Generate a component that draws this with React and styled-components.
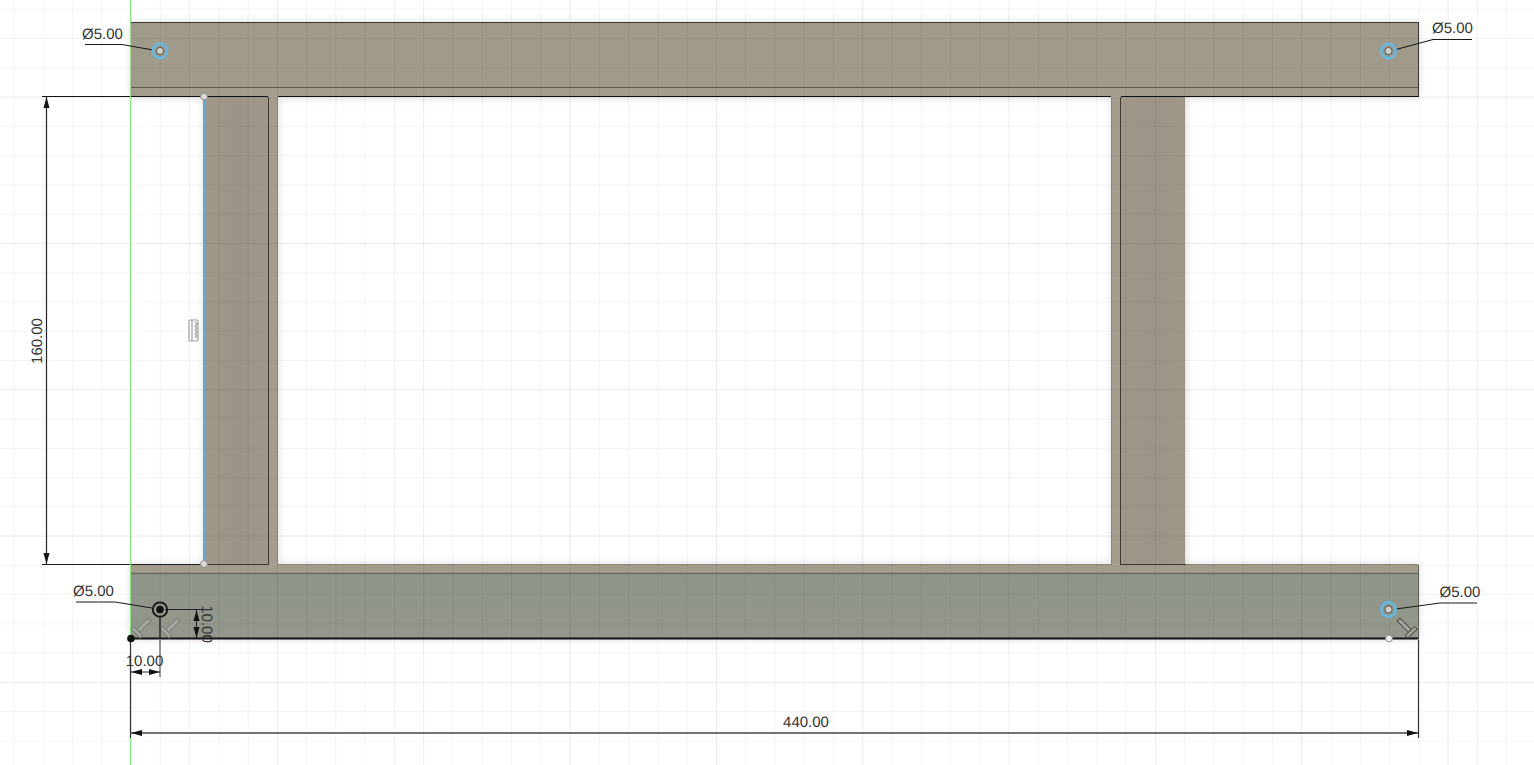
import React from 'react';
import styled, { createGlobalStyle } from 'styled-components';

const GlobalStyle = createGlobalStyle`
  html, body {
    margin: 0;
    padding: 0;
    background: #fff;
    overflow: hidden;
  }
`;

const Canvas = styled.main`
  width: 1534px;
  height: 765px;
  background: #fff;
  overflow: hidden;
`;

const Sketch = styled.svg`
  display: block;
`;

const DimText = styled.text`
  font-family: "Liberation Sans", Arial, sans-serif;
  font-size: 15px;
  fill: #333;
  text-rendering: geometricPrecision;
`;

const WIDTH = 1534;
const HEIGHT = 765;
const STEP = 29.27;
const ORIGIN_X = 131;
const MAJOR_Y = 682.4;

function gridLines() {
  const lines = [];
  for (let i = -5; i < 50; i++) {
    const x = ORIGIN_X + i * STEP;
    lines.push({ key: 'v' + i, x1: x, y1: 0, x2: x, y2: HEIGHT, major: ((i % 5) + 5) % 5 === 0 });
  }
  for (let i = -3; i < 25; i++) {
    const y = MAJOR_Y - i * STEP;
    lines.push({ key: 'h' + i, x1: 0, y1: y, x2: WIDTH, y2: y, major: ((i % 5) + 5) % 5 === 0 });
  }
  return lines;
}

function Grid() {
  return (
    <g>
      {gridLines().map((l) => (
        <line
          key={l.key}
          x1={l.x1}
          y1={l.y1}
          x2={l.x2}
          y2={l.y2}
          stroke={l.major ? 'rgba(0,0,0,0.08)' : 'rgba(0,0,0,0.045)'}
          strokeWidth="1"
        />
      ))}
    </g>
  );
}

function Arrow({ x, y, dir }) {
  const pts = {
    left: `${x},${y} ${x + 11},${y - 3} ${x + 11},${y + 3}`,
    right: `${x},${y} ${x - 11},${y - 3} ${x - 11},${y + 3}`,
    up: `${x},${y} ${x - 3},${y + 11} ${x + 3},${y + 11}`,
    down: `${x},${y} ${x - 3},${y - 11} ${x + 3},${y - 11}`,
  };
  return <polygon points={pts[dir]} fill="#111" />;
}

// perpendicular constraint glyph, drawn upright then rotated
function PerpGlyph({ x, y, rotate, stroke = '#7c7c78' }) {
  return (
    <g transform={`translate(${x} ${y}) rotate(${rotate})`} fill="#a6a8a1" stroke={stroke} strokeWidth="1">
      <rect x="-2" y="-11" width="4" height="16" />
      <rect x="-6.5" y="5" width="13" height="3.6" />
    </g>
  );
}

function Hole({ x, y }) {
  return (
    <g>
      <circle cx={x} cy={y} r="7.2" fill="none" stroke="#62bbe6" strokeWidth="2.4" />
      <circle cx={x} cy={y} r="3.6" fill="#cfcfcc" stroke="#55554f" strokeWidth="1" />
    </g>
  );
}

const HOLES = [
  { x: 160, y: 51 },
  { x: 1388.5, y: 51 },
  { x: 1388.5, y: 609.5 },
];

const LEADERS = [
  { points: '85,44.5 122,44.5 153,50', label: 'Ø5.00', tx: 82, ty: 39 },
  { points: '1472,39.5 1433,39.5 1396,49.5', label: 'Ø5.00', tx: 1432, ty: 33 },
  { points: '76,602 115,602 152,608', label: 'Ø5.00', tx: 73, ty: 596 },
  { points: '1477,603 1440,603 1396,609', label: 'Ø5.00', tx: 1439.5, ty: 597 },
];

export default function App() {
  return (
    <Canvas>
      <GlobalStyle />
      <Sketch width={WIDTH} height={HEIGHT} viewBox={`0 0 ${WIDTH} ${HEIGHT}`}>
        <defs>
          <filter id="soft" x="-10%" y="-10%" width="120%" height="120%">
            <feGaussianBlur stdDeviation="4" />
          </filter>
          <linearGradient id="colShade" x1="0" y1="0" x2="1" y2="0">
            <stop offset="0" stopColor="#9f9889" />
            <stop offset="0.55" stopColor="#9c9587" />
            <stop offset="1" stopColor="#9f9889" />
          </linearGradient>
          <linearGradient id="bottomShade" x1="0" y1="0" x2="0" y2="1">
            <stop offset="0" stopColor="#90958a" />
            <stop offset="1" stopColor="#93978c" />
          </linearGradient>
        </defs>

        {/* soft shadow round the body */}
        <g fill="#000" opacity="0.14" filter="url(#soft)">
          <rect x="131" y="22" width="1288" height="76" />
          <rect x="204" y="96" width="74" height="470" />
          <rect x="1112" y="96" width="74" height="470" />
          <rect x="131" y="564" width="1288" height="75" />
        </g>

        {/* body */}
        <rect x="131" y="22.5" width="1287.5" height="65" fill="#a09a8b" />
        <rect x="131" y="87" width="1287.5" height="9.5" fill="#a49d8e" />
        <rect x="204" y="96.5" width="64.5" height="468" fill="url(#colShade)" />
        <rect x="268.5" y="96.5" width="9" height="468" fill="#a49d8e" />
        <rect x="1111.5" y="96.5" width="9" height="468" fill="#a49d8e" />
        <rect x="1120.5" y="96.5" width="64.5" height="468" fill="url(#colShade)" />
        <rect x="131" y="564.5" width="1287.5" height="9" fill="#a49d8e" />
        <rect x="131" y="573" width="1287.5" height="65.5" fill="url(#bottomShade)" />

        <Grid />

        {/* edges */}
        <g stroke="#3a382f" strokeWidth="1" fill="none">
          <line x1="131" y1="22.5" x2="1418.5" y2="22.5" />
          <line x1="131" y1="87.5" x2="1418.5" y2="87.5" stroke="#5d594c" />
          <line x1="1418.5" y1="22" x2="1418.5" y2="97" />
          <line x1="1418.5" y1="565" x2="1418.5" y2="639" stroke="#5f5f56" />
          <line x1="268.5" y1="97" x2="268.5" y2="565" />
          <line x1="1120.5" y1="97" x2="1120.5" y2="565" />
          <line x1="277.5" y1="97" x2="277.5" y2="565" stroke="#8a8574" />
          <line x1="1111.5" y1="97" x2="1111.5" y2="565" stroke="#8a8574" />
          <line x1="204" y1="564.5" x2="268" y2="564.5" />
          <line x1="1120" y1="564.5" x2="1186" y2="564.5" />
          <line x1="278" y1="564.5" x2="1111" y2="564.5" stroke="#8f8a79" />
          <line x1="1186" y1="564.5" x2="1418" y2="564.5" stroke="#8f8a79" />
          <line x1="131" y1="573.5" x2="1418.5" y2="573.5" stroke="#666a61" strokeWidth="1.4" />
        </g>

        {/* top edge of the opening, broken where the strips cross it */}
        <g stroke="#111" strokeWidth="1">
          <line x1="42" y1="96.5" x2="268" y2="96.5" />
          <line x1="278" y1="96.5" x2="1111" y2="96.5" />
          <line x1="1121" y1="96.5" x2="1418.5" y2="96.5" />
        </g>
        <line x1="42" y1="564.5" x2="204" y2="564.5" stroke="#222" strokeWidth="1" />

        {/* sketch axes and selected lines */}
        <line x1="130.5" y1="0" x2="130.5" y2="765" stroke="#8fe48f" strokeWidth="1.2" />
        <line x1="130.5" y1="22" x2="130.5" y2="97" stroke="#a8dd9c" strokeWidth="1" />
        <line x1="204" y1="97" x2="204" y2="564" stroke="#5aa9d6" strokeWidth="2" />
        <line x1="130.5" y1="640" x2="130.5" y2="738" stroke="#333" strokeWidth="1.2" />
        <line x1="160" y1="640" x2="160" y2="677" stroke="#555" strokeWidth="1.2" />
        <line x1="1418.5" y1="640" x2="1418.5" y2="738" stroke="#333" strokeWidth="1.2" />
        <line x1="131" y1="638.5" x2="1418.5" y2="638.5" stroke="#111" strokeWidth="2" />

        {/* 160 dimension */}
        <line x1="46.5" y1="97" x2="46.5" y2="564" stroke="#222" strokeWidth="1.2" />
        <Arrow x={46.5} y={97} dir="up" />
        <Arrow x={46.5} y={564} dir="down" />

        {/* 440 dimension */}
        <line x1="131" y1="733" x2="1418" y2="733" stroke="#444" strokeWidth="1.4" />
        <Arrow x={131} y={733} dir="left" />
        <Arrow x={1418} y={733} dir="right" />

        {/* 10 horizontal dimension */}
        <line x1="131" y1="672" x2="160" y2="672" stroke="#222" strokeWidth="1" />
        <Arrow x={131} y={672} dir="left" />
        <Arrow x={160} y={672} dir="right" />

        {/* 10 vertical dimension */}
        <line x1="165" y1="609.5" x2="212" y2="609.5" stroke="#222" strokeWidth="1" />
        <line x1="196.5" y1="610" x2="196.5" y2="638" stroke="#222" strokeWidth="1" />
        <Arrow x={196.5} y={610} dir="up" />
        <Arrow x={196.5} y={638} dir="down" />

        {/* constraint glyphs */}
        <PerpGlyph x={141.6} y={627.4} rotate={45} />
        <PerpGlyph x={170.6} y={627.4} rotate={45} />
        <PerpGlyph x={1406.4} y={627.4} rotate={-45} stroke="#4d4d48" />
        <g fill="none" stroke="#a0a0a0" strokeWidth="1.2">
          <rect x="189" y="320" width="9" height="21" rx="1" />
          <line x1="192" y1="320" x2="192" y2="341" />
          <path d="M195 322 l2 2 l-2 2 l2 2 l-2 2 l2 2 l-2 2 l2 2 l-2 2" />
        </g>

        {/* leaders */}
        {LEADERS.map((l) => (
          <polyline key={l.points} points={l.points} fill="none" stroke="#1a1a1a" strokeWidth="1.1" />
        ))}

        {/* holes and points */}
        {HOLES.map((h) => (
          <Hole key={h.x + '-' + h.y} x={h.x} y={h.y} />
        ))}
        <circle cx="160" cy="609.5" r="7.2" fill="none" stroke="#111" strokeWidth="1.8" />
        <circle cx="160" cy="609.5" r="3.8" fill="#111" />
        <line x1="160" y1="616" x2="160" y2="639" stroke="#222" strokeWidth="1.4" />
        <circle cx="131" cy="638.5" r="3.8" fill="#111" />
        <circle cx="204" cy="96.5" r="3.4" fill="#dcdcd8" stroke="#8d8d88" strokeWidth="1" />
        <circle cx="204" cy="564" r="3.4" fill="#dcdcd8" stroke="#8d8d88" strokeWidth="1" />
        <circle cx="1389" cy="638.5" r="3.4" fill="#f2f2f0" stroke="#8d8d88" strokeWidth="1" />

        {/* labels */}
        {LEADERS.map((l) => (
          <DimText key={l.tx} x={l.tx} y={l.ty}>{l.label}</DimText>
        ))}
        <DimText x={806} y={727} textAnchor="middle">440.00</DimText>
        <DimText x={144.5} y={666} textAnchor="middle">10.00</DimText>
        <DimText transform="translate(42 341) rotate(-90)" textAnchor="middle">160.00</DimText>
        <DimText transform="translate(202 624) rotate(90)" textAnchor="middle">10.00</DimText>
      </Sketch>
    </Canvas>
  );
}
